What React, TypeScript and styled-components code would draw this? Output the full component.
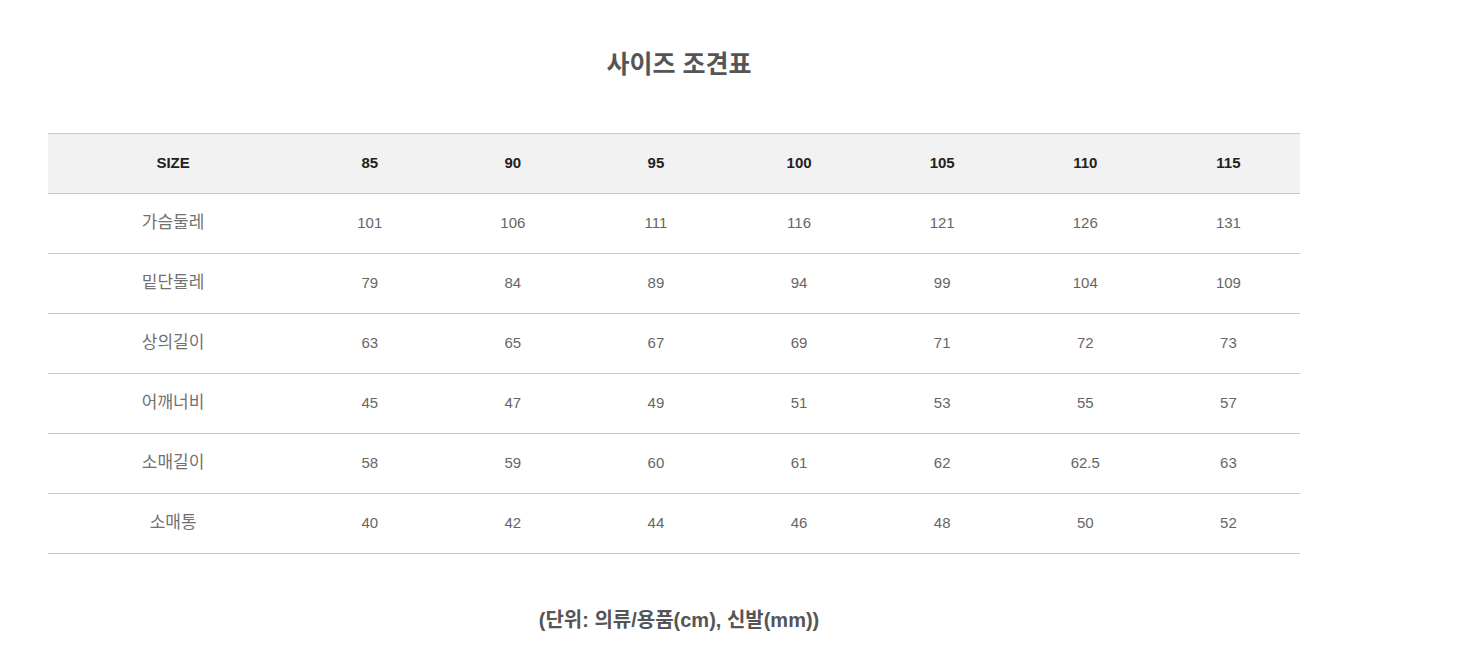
import styled, { createGlobalStyle } from 'styled-components';

const GlobalStyle = createGlobalStyle`
  html, body {
    margin: 0;
    padding: 0;
    background: #fff;
  }
  body {
    font-family: 'Liberation Sans', 'Noto Sans CJK KR', sans-serif;
  }
`;

const Wrapper = styled.div`
  width: 1262px;
  margin-left: 48px;
  padding-top: 48px;
  padding-bottom: 16px;
`;

const Title = styled.h2`
  margin: 0;
  text-align: center;
  font-family: 'Liberation Sans', 'Noto Sans CJK KR', sans-serif;
  font-size: 25px;
  line-height: 32px;
  font-weight: 700;
  color: #555;
`;

const Table = styled.table`
  width: 1252px;
  margin-top: 53px;
  border-collapse: separate;
  border-spacing: 0;
  table-layout: fixed;
`;

const HeadRow = styled.tr`
  background: #f2f2f2;
`;

const HeadCell = styled.th`
  padding: 0 0 2px;
  line-height: 57px;
  font-size: 15px;
  font-weight: 700;
  color: #222;
  text-align: center;
  border-top: 1px solid #c9c9c9;
  border-bottom: 1px solid #c9c9c9;
`;

const Cell = styled.td<{ $label?: boolean }>`
  padding: 0 0 2px;
  line-height: 57px;
  font-size: ${p => (p.$label ? '17px' : '15px')};
  color: ${p => (p.$label ? '#717171' : '#666')};
  text-align: center;
  border-bottom: 1px solid #c9c9c9;
`;

const Note = styled.p`
  margin: 54px 0 0;
  text-align: center;
  font-size: 20px;
  line-height: 24px;
  font-weight: 700;
  color: #555;
`;

const sizes = ['85', '90', '95', '100', '105', '110', '115'];

const rows: { label: string; values: string[] }[] = [
  { label: '가슴둘레', values: ['101', '106', '111', '116', '121', '126', '131'] },
  { label: '밑단둘레', values: ['79', '84', '89', '94', '99', '104', '109'] },
  { label: '상의길이', values: ['63', '65', '67', '69', '71', '72', '73'] },
  { label: '어깨너비', values: ['45', '47', '49', '51', '53', '55', '57'] },
  { label: '소매길이', values: ['58', '59', '60', '61', '62', '62.5', '63'] },
  { label: '소매통', values: ['40', '42', '44', '46', '48', '50', '52'] },
];

export default function App() {
  return (
    <>
      <GlobalStyle />
      <Wrapper>
        <Title>사이즈 조견표</Title>
        <Table>
          <colgroup>
            <col style={{ width: 250 }} />
            {sizes.map(s => (
              <col key={s} style={{ width: 143 }} />
            ))}
          </colgroup>
          <thead>
            <HeadRow>
              <HeadCell>SIZE</HeadCell>
              {sizes.map(s => (
                <HeadCell key={s}>{s}</HeadCell>
              ))}
            </HeadRow>
          </thead>
          <tbody>
            {rows.map(row => (
              <tr key={row.label}>
                <Cell $label>{row.label}</Cell>
                {row.values.map((v, i) => (
                  <Cell key={i}>{v}</Cell>
                ))}
              </tr>
            ))}
          </tbody>
        </Table>
        <Note>(단위: 의류/용품(cm), 신발(mm))</Note>
      </Wrapper>
    </>
  );
}
